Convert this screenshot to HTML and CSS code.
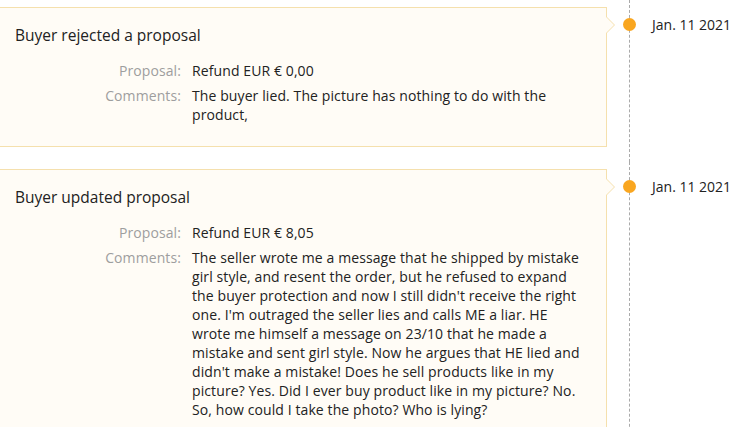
FILE: index.html
```html
<!DOCTYPE html>
<html>
<head>
<meta charset="utf-8">
<link rel="stylesheet" href="styles.css">
</head>
<body>
<div class="timeline">
  <div class="item">
    <div class="card">
      <div class="title">Buyer rejected a proposal</div>
      <div class="fields">
        <div class="label">Proposal:</div>
        <div class="value">Refund EUR € 0,00</div>
        <div class="label">Comments:</div>
        <div class="value">The buyer lied. The picture has nothing to do with the product,</div>
      </div>
    </div>
    <div class="axis"><span class="line"></span><span class="dot"></span></div>
    <div class="date">Jan. 11 2021</div>
  </div>
  <div class="item">
    <div class="card">
      <div class="title">Buyer updated proposal</div>
      <div class="fields">
        <div class="label">Proposal:</div>
        <div class="value">Refund EUR € 8,05</div>
        <div class="label">Comments:</div>
        <div class="value">The seller wrote me a message that he shipped by mistake girl style, and resent the order, but he refused to expand the buyer protection and now I still didn't receive the right one. I'm outraged the seller lies and calls ME a liar. HE wrote me himself a message on 23/10 that he made a mistake and sent girl style. Now he argues that HE lied and didn't make a mistake! Does he sell products like in my picture? Yes. Did I ever buy product like in my picture? No. So, how could I take the photo? Who is lying?</div>
      </div>
    </div>
    <div class="axis"><span class="line"></span><span class="dot"></span></div>
    <div class="date">Jan. 11 2021</div>
  </div>
</div>
</body>
</html>
```

FILE: styles.css
```css
* { box-sizing: border-box; }
html, body { margin: 0; padding: 0; background: #fff; }
body {
  font-family: "Open Sans", "Noto Sans", sans-serif;
  color: #222;
  overflow: hidden;
  width: 747px;
  height: 427px;
}
.timeline { margin-left: -1px; }
.item {
  display: grid;
  grid-template-columns: 608px 45px auto;
  align-items: start;
}
.card {
  position: relative;
  margin: 7px 0 15px;
  background: #fffcf6;
  border: 1px solid #f5e0ad;
  padding: 16px 16px 22px 16px;
}
.card::before, .card::after {
  content: "";
  position: absolute;
  top: 9px;
  width: 0; height: 0;
  border-style: solid;
  border-color: transparent;
}
.card::before {
  right: -9px;
  border-width: 8px 0 8px 8px;
  border-left-color: #f5e0ad;
}
.card::after {
  right: -8px;
  border-width: 8px 0 8px 8px;
  border-left-color: #fffcf6;
}
.title {
  font-size: 15.5px;
  line-height: 22px;
  color: #222;
  margin-bottom: 15px;
  margin-left: -1px;
}
.fields {
  display: grid;
  grid-template-columns: 165px 392px;
  column-gap: 11px;
  row-gap: 6px;
  font-size: 14px;
  line-height: 19px;
  letter-spacing: 0.1px;
}
.label { text-align: right; color: #9e9e9e; }
.value { color: #222; }
.axis {
  position: relative;
  align-self: stretch;
  display: flex;
}
.line {
  margin-left: 22px;
  border-left: 1px dashed #aaa;
}
.dot {
  position: absolute;
  left: 16px;
  top: 18px;
  width: 13px;
  height: 13px;
  border-radius: 50%;
  background: #f9a620;
}
.date {
  font-size: 14px;
  line-height: 19px;
  padding-top: 15px;
  color: #222;
  white-space: nowrap;
}
```
